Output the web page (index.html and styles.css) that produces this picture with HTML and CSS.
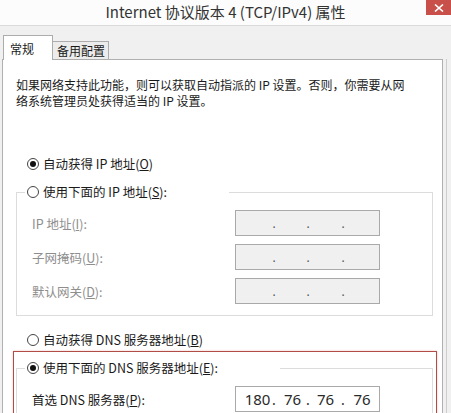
FILE: index.html
```html
<!DOCTYPE html>
<html lang="zh-CN">
<head>
  <meta charset="UTF-8">
  <meta name="viewport" content="width=device-width, initial-scale=1.0">
  <title>Internet 协议版本 4 (TCP/IPv4) 属性</title>
  <link rel="stylesheet" href="styles.css">
</head>
<body>
  <div class="dialog">
    <!-- Title bar -->
    <div class="titlebar">
      <span></span>
      <h1 class="title">Internet 协议版本 4 (TCP/IPv4) 属性</h1>
      <div class="close">
        <svg width="10" height="8" viewBox="0 0 10 8">
          <path d="M1 0.5 L9 7.5 M9 0.5 L1 7.5" stroke="#fff" stroke-width="1.6" fill="none"/>
        </svg>
      </div>
    </div>

    <!-- Tabs -->
    <div class="tabs">
      <div class="tab active">常规</div>
      <div class="tab">备用配置</div>
    </div>

    <div class="panel">
      <p class="intro">如果网络支持此功能，则可以获取自动指派的 IP 设置。否则，你需要从网<br>络系统管理员处获得适当的 IP 设置。</p>

      <label class="radio standalone"><span class="dot checked"></span><span>自动获得 IP 地址(<u>O</u>)</span></label>

      <fieldset class="group ip-group">
        <legend><label class="radio"><span class="dot"></span><span>使用下面的 IP 地址(<u>S</u>):</span></label></legend>
        <div class="field disabled">
          <span>IP 地址(<u>I</u>):</span>
          <div class="ipbox"><span></span><i>.</i><span></span><i>.</i><span></span><i>.</i><span></span></div>
        </div>
        <div class="field disabled">
          <span>子网掩码(<u>U</u>):</span>
          <div class="ipbox"><span></span><i>.</i><span></span><i>.</i><span></span><i>.</i><span></span></div>
        </div>
        <div class="field disabled">
          <span>默认网关(<u>D</u>):</span>
          <div class="ipbox"><span></span><i>.</i><span></span><i>.</i><span></span><i>.</i><span></span></div>
        </div>
      </fieldset>

      <label class="radio standalone dns-auto"><span class="dot"></span><span>自动获得 DNS 服务器地址(<u>B</u>)</span></label>

      <!-- Red highlight box -->
      <div class="highlight">
        <fieldset class="group">
          <legend><label class="radio"><span class="dot checked"></span><span>使用下面的 DNS 服务器地址(<u>E</u>):</span></label></legend>
          <div class="field">
            <span>首选 DNS 服务器(<u>P</u>):</span>
            <div class="ipbox filled"><span>180</span><i>.</i><span>76</span><i>.</i><span>76</span><i>.</i><span>76</span></div>
          </div>
        </fieldset>
      </div>
    </div>
  </div>
</body>
</html>
```

FILE: styles.css
```css
html, body {
  margin: 0;
  padding: 0;
  height: 100%;
  overflow: hidden;
}

body {
  background: #f0f0f0;
  font-family: "Noto Sans CJK SC", "Noto Sans", sans-serif;
  color: #1a1a1a;
}

/* Title bar */
.titlebar {
  display: grid;
  grid-template-columns: 25px 1fr 25px;
  height: 25px;
  background: #fcfcfc;
  border-bottom: 1px solid #dadada;
}

.title {
  margin: 0;
  font-size: 15px;
  font-weight: normal;
  line-height: 24px;
  text-align: center;
  color: #333;
}

.close {
  width: 25px;
  height: 15px;
  background: #c9504a;
  display: flex;
  align-items: center;
  justify-content: center;
}

/* Tabs */
.tabs {
  display: flex;
  align-items: flex-end;
  height: 25px;
  margin: 9px 0 -1px 3px;
  position: relative;
  z-index: 1;
}

.tab {
  box-sizing: border-box;
  height: 19px;
  padding: 0 3px 0 4px;
  font-size: 12px;
  line-height: 17px;
  background: #ececec;
  border: 1px solid #acacac;
}

.tab.active {
  height: 25px;
  width: 50px;
  padding: 4px 0 0 6px;
  background: #fff;
  border-bottom: none;
  margin-right: -1px;
  position: relative;
  z-index: 1;
}

/* Main panel */
.panel {
  box-sizing: border-box;
  width: 441px;
  height: calc(100vh - 59px);
  overflow: hidden;
  margin-left: 2px;
  padding: 0 9px 0 13px;
  background: #fff;
  border: 1px solid #b0b0b0;
  border-bottom: none;
  box-shadow: 3px 0 0 #f0f0f0, 4px 0 0 #cdcdcd;
  font-size: 12px;
}

.intro {
  margin: 17px 0 0;
  line-height: 16px;
}

/* Radio buttons */
.radio {
  display: flex;
  align-items: center;
  gap: 4px;
  height: 16px;
  line-height: 16px;
  font-size: 12.5px;
  white-space: nowrap;
}

.standalone {
  margin-top: 47px;
  padding-left: 11px;
}

.dns-auto {
  margin-top: 16px;
}

.dot {
  box-sizing: border-box;
  width: 12px;
  height: 12px;
  border: 1px solid #444;
  border-radius: 50%;
  background: #fff;
  position: relative;
}

.dot.checked::after {
  content: "";
  position: absolute;
  left: 2px;
  top: 2px;
  width: 6px;
  height: 6px;
  border-radius: 50%;
  background: #111;
}

/* Group boxes */
.group {
  margin: 0;
  padding: 10px 0 11px 0;
  border: 1px solid #dcdcdc;
  min-width: 0;
}

.ip-group {
  margin-top: 12px;
}

.group legend {
  margin-left: 8px;
  padding: 0 62px 0 2px;
}

.field {
  display: grid;
  grid-template-columns: 203px 145px;
  align-items: center;
  padding-left: 15px;
  font-size: 12.5px;
}

.field + .field {
  margin-top: 8px;
}

.field.disabled {
  color: #8e8e8e;
}

/* IP address boxes */
.ipbox {
  box-sizing: border-box;
  height: 26px;
  display: grid;
  grid-template-columns: 36px 4px 30px 4px 31px 4px 34px;
  align-items: center;
  border: 1px solid #a9a9a9;
  background: #f0f0f0;
  font-family: "Noto Sans", sans-serif;
  font-size: 14px;
  color: #222;
}

.ipbox span {
  text-align: center;
}

.ipbox i {
  font-style: normal;
  text-align: center;
  font-size: 12px;
  color: #555;
}

.ipbox.filled {
  background: #fff;
  color: #2a2a2a;
  font-size: 15px;
}

.ipbox.filled span:first-child {
  padding-left: 7px;
}

.ipbox.filled span:nth-child(3) {
  padding-left: 3px;
}

.ipbox.filled i {
  font-size: 14px;
  color: #2a2a2a;
}

/* Red highlight */
.highlight {
  margin: 3px -4px 0 -3px;
  padding: 8px 3px 20px 2px;
  border: 1px solid #b04d47;
  box-shadow: 0 0 2px rgba(200, 80, 70, 0.35);
}
```
